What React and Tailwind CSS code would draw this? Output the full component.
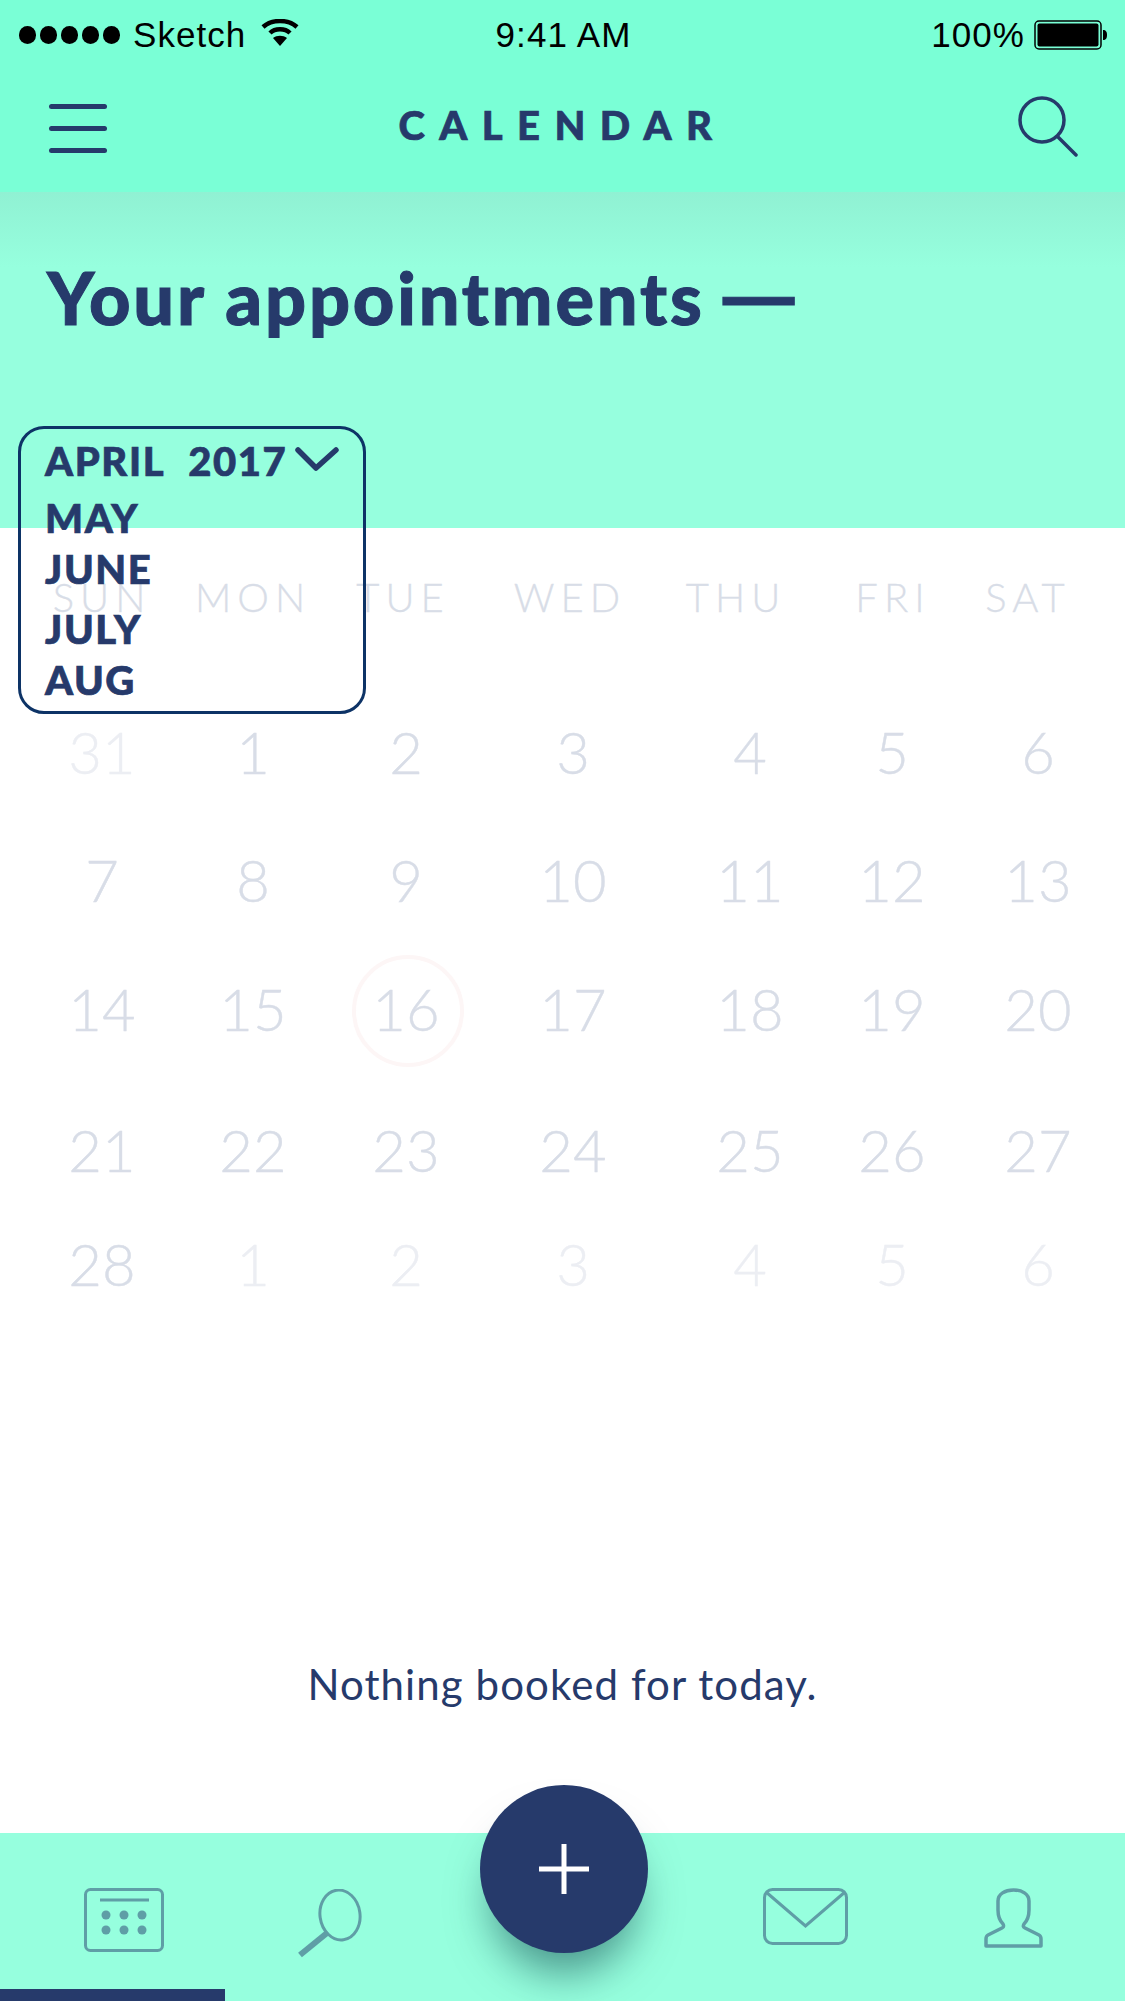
const NAVY = "#263a6b";

function Cell({ children, className = "" }) {
  return <div className={"w-[140px] text-center " + className}>{children}</div>;
}

const LIGHT = "text-[#eceef3]";
const MID = "text-[#d8dde7]";

const weeks = [
  [["31", LIGHT], ["1", MID], ["2", MID], ["3", MID], ["4", MID], ["5", MID], ["6", MID]],
  [["7", MID], ["8", MID], ["9", MID], ["10", MID], ["11", MID], ["12", MID], ["13", MID]],
  [["14", MID], ["15", MID], ["16", MID], ["17", MID], ["18", MID], ["19", MID], ["20", MID]],
  [["21", MID], ["22", MID], ["23", MID], ["24", MID], ["25", MID], ["26", MID], ["27", MID]],
  [["28", MID], ["1", LIGHT], ["2", LIGHT], ["3", LIGHT], ["4", LIGHT], ["5", LIGHT], ["6", LIGHT]],
];

function StatusBar() {
  return (
    <div className="flex h-[68px] items-center justify-between pl-[19px] pr-[17px] pt-[2px] font-['Liberation_Sans',sans-serif] text-[35px] tracking-[0.03em] text-black">
      <div className="flex w-[400px] items-center">
        <div className="flex gap-[4px]">
          {[0, 1, 2, 3, 4].map((i) => (
            <span key={i} className="h-[18px] w-[17px] rounded-full bg-black" />
          ))}
        </div>
        <span className="ml-[13px]">Sketch</span>
        <svg className="ml-[15px] -mt-[6px]" width="38" height="27" viewBox="0 0 38 27" fill="none" stroke="#000">
          <path d="M2 8C11 0 27 0 36 8" strokeWidth="4.5" />
          <path d="M9 14C14 9 24 9 29 14" strokeWidth="4.5" />
          <path d="M19 27L12 19C16 16 22 16 26 19Z" fill="#000" strokeWidth="0" />
        </svg>
      </div>
      <span>9:41 AM</span>
      <div className="flex w-[400px] items-center justify-end">
        <span className="mr-[9px]">100%</span>
        <svg width="74" height="30" viewBox="0 0 74 30">
          <rect x="1" y="1" width="66" height="28" rx="4" fill="none" stroke="#000" strokeWidth="1.5" />
          <rect x="3.5" y="3.5" width="61" height="23" rx="2" fill="#000" />
          <path d="M69 10c3 0 4 2 4 5s-1 5-4 5z" fill="#000" />
        </svg>
      </div>
    </div>
  );
}

function Header() {
  return (
    <div className="flex h-[124px] items-start justify-between bg-[#7affd6] pl-[49px] pr-[47px]">
      <div className="mt-[36px] flex w-[58px] flex-col gap-[17px]">
        <span className="h-[5px] rounded-full bg-[#263a6b]" />
        <span className="h-[5px] rounded-full bg-[#263a6b]" />
        <span className="h-[5px] rounded-full bg-[#263a6b]" />
      </div>
      <div className="mt-[27px] font-['Lato',sans-serif] text-[40px] font-black leading-[60px] tracking-[0.36em] text-[#263a6b] [-webkit-text-stroke:0.7px_#263a6b]">
        CALENDAR
      </div>
      <svg className="mt-[28px]" width="60" height="62" viewBox="0 0 60 62" fill="none" stroke={NAVY} strokeWidth="3.5" strokeLinecap="round">
        <circle cx="24" cy="24" r="22" />
        <path d="M40 41L58 59" />
      </svg>
    </div>
  );
}

function Dropdown() {
  return (
    <div className="absolute left-[18px] top-[426px] h-[288px] w-[348px] rounded-[26px] border-[3px] border-[#0d3366] pl-[24px] pt-[7px] font-['Lato',sans-serif] text-[40px] font-black tracking-[0.04em] text-[#263a6b] [-webkit-text-stroke:0.7px_#263a6b]">
      <div className="flex h-[50px] items-center leading-[50px]">
        <span>APRIL</span>
        <span className="ml-[23px]">2017</span>
        <svg className="ml-[8px] -mt-[2px]" width="44" height="26" viewBox="0 0 44 26" fill="none" stroke={NAVY} strokeWidth="5.5" strokeLinecap="round" strokeLinejoin="round">
          <path d="M3 3L21 21L41 3" />
        </svg>
      </div>
      <div className="mt-[7px] leading-[50px]">
        <div className="h-[51px]">MAY</div>
        <div className="h-[60px]">JUNE</div>
        <div className="h-[51px]">JULY</div>
        <div>AUG</div>
      </div>
    </div>
  );
}

function Calendar() {
  return (
    <div className="h-[1305px] bg-white font-['Lato',sans-serif]">
      <div className="grid grid-cols-[151px_150px_167px_166px_157px_135px_140px] pl-[32px] pt-[44px] text-[40px] font-light leading-[50px] tracking-[0.15em] text-[#d8dde7] [-webkit-text-stroke:0.3px_#d8dde7]">
        {["SUN", "MON", "TUE", "WED", "THU", "FRI", "SAT"].map((d) => (
          <Cell key={d}>{d}</Cell>
        ))}
      </div>
      <div className="mt-[100px] grid grid-cols-[151px_153px_167px_177px_142px_146px_140px] grid-rows-[128px_129px_141px_114px_60px] pl-[32px] text-[58px] font-light leading-[60px] [-webkit-text-stroke:0.4px_currentColor]">
        {weeks.flat().map(([n, c], i) => (
          <Cell key={i} className={c + " relative"}>
            {n === "16" && (
              <span className="absolute left-[16px] top-[-24px] h-[112px] w-[112px] rounded-full border-[4px] border-[#fdf6f6]" />
            )}
            <span className="relative">{n}</span>
          </Cell>
        ))}
      </div>
      <div className="mt-[365px] text-center text-[42px] leading-[50px] tracking-[0.026em] text-[#263a6b]">
        Nothing booked for today.
      </div>
    </div>
  );
}

function TabBar() {
  const stroke = "#5f9ea6";
  return (
    <div className="relative h-[168px] bg-[#96ffde]">
      <svg className="absolute left-[84px] top-[55px]" width="80" height="64" viewBox="0 0 80 64" fill="none">
        <rect x="1.5" y="1.5" width="77" height="61" rx="5" stroke={stroke} strokeWidth="3" />
        <path d="M16 12H65" stroke={stroke} strokeWidth="3" />
        {[22, 40, 58].map((x) => (
          <g key={x} fill={stroke}>
            <circle cx={x} cy="27" r="4.5" />
            <circle cx={x} cy="42" r="4.5" />
          </g>
        ))}
      </svg>
      <svg className="absolute left-[297px] top-[56px]" width="68" height="70" viewBox="0 0 68 70" fill="none" stroke={stroke}>
        <ellipse cx="43" cy="26" rx="20" ry="25" transform="rotate(-8 43 26)" strokeWidth="3" />
        <path d="M30 44L3 66" strokeWidth="6" />
      </svg>
      <svg className="absolute left-[763px] top-[55px]" width="85" height="57" viewBox="0 0 85 57" fill="none" stroke={stroke} strokeWidth="3">
        <rect x="1.5" y="1.5" width="82" height="54" rx="8" />
        <path d="M3 4L42.5 38L82 4" />
      </svg>
      <svg className="absolute left-[984px] top-[55px]" width="59" height="60" viewBox="0 0 59 60" fill="none" stroke={stroke} strokeWidth="3.5" strokeLinejoin="round">
        <path d="M14 13C14 6 21 2 29.5 2S45 6 45 13V22C45 28 43 33 40 36C39 38 39 39 41 40L55 47C57 48 57 49 57 51V58H2V51C2 49 2 48 4 47L18 40C20 39 20 38 19 36C16 33 14 28 14 22Z" />
      </svg>
      <div className="absolute bottom-0 left-0 h-[12px] w-[225px] bg-[#263a6b]" />
    </div>
  );
}

export default function App() {
  return (
    <div className="relative h-[2001px] w-[1125px] overflow-hidden bg-white">
      <div className="bg-[#7affd6]">
        <StatusBar />
        <Header />
      </div>
      <div className="h-[336px] bg-[#96ffde] bg-[linear-gradient(#90f1d3,#96ffde_75px)] pl-[47px] pt-[62px] font-['Lato',sans-serif] text-[72px] font-black leading-[76px] tracking-[0.039em] text-[#263a6b] [-webkit-text-stroke:1px_#263a6b]">
        Your appointments <span className="-ml-[7px] inline-block origin-left scale-x-[1.3] text-[80px] leading-none">—</span>
      </div>
      <Calendar />
      <TabBar />
      <Dropdown />
      <div className="absolute left-[480px] top-[1785px] flex h-[168px] w-[168px] items-center justify-center rounded-full bg-[#263a6b] shadow-[0_32px_44px_-12px_rgba(10,60,70,0.55)]">
        <svg width="50" height="50" viewBox="0 0 50 50" stroke="#fff" strokeWidth="5">
          <path d="M25 0V50M0 25H50" />
        </svg>
      </div>
    </div>
  );
}
